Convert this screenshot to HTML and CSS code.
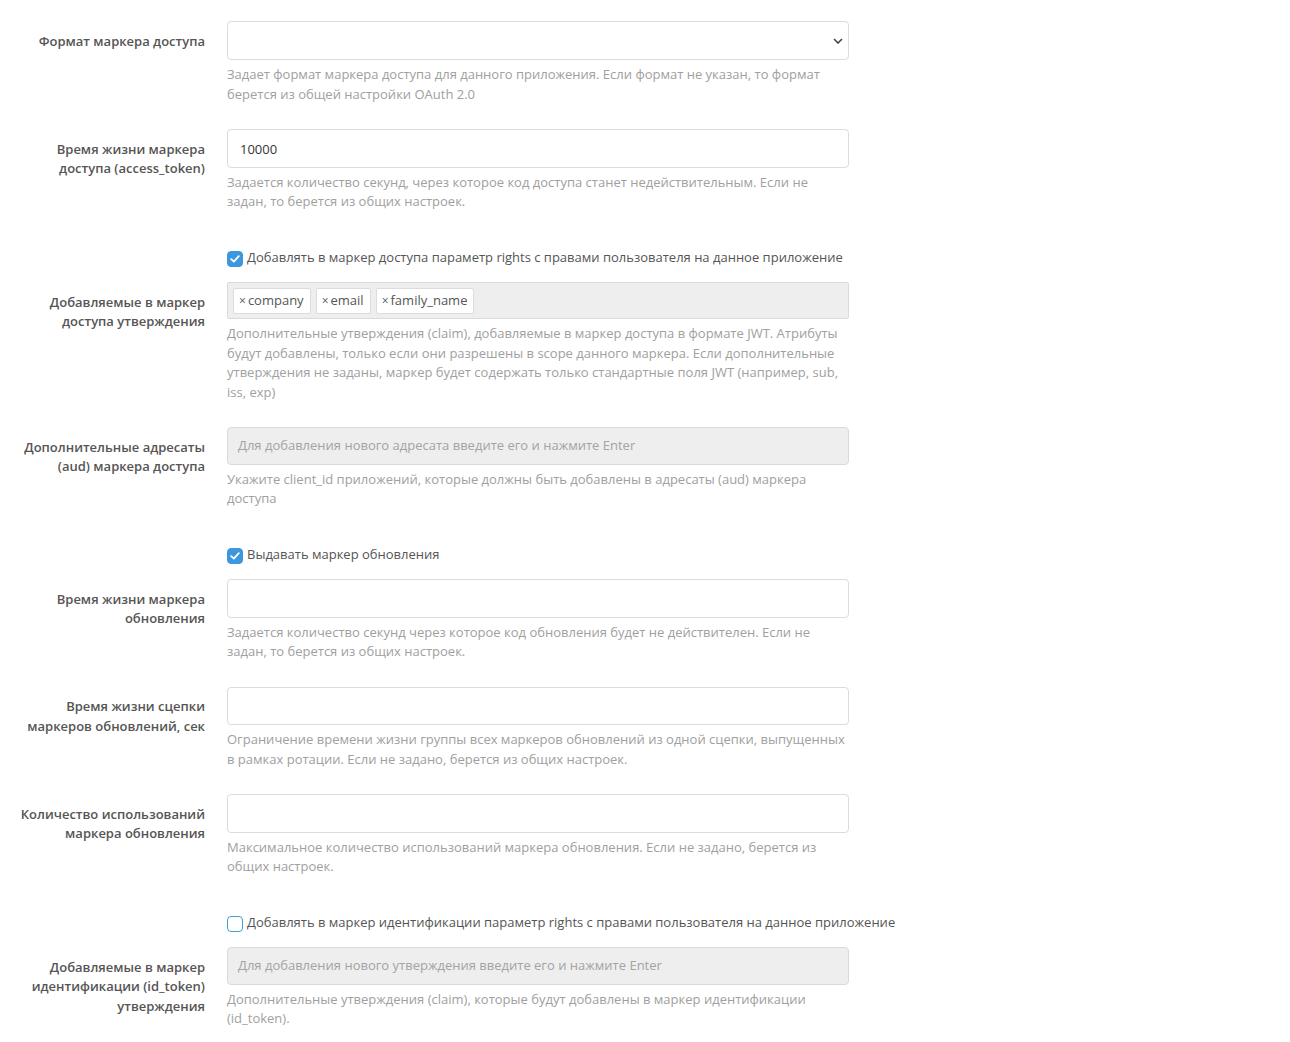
FILE: index.html
```html
<!DOCTYPE html>
<html lang="ru">
<head>
<meta charset="utf-8">
<link rel="stylesheet" href="styles.css">
</head>
<body>
<form class="form">
  <div class="group">
    <label class="lbl">Формат маркера доступа</label>
    <div class="ctl">
      <div class="select"><span class="chev"><svg width="10" height="6" viewBox="0 0 10 6"><path d="M1 1l4 4 4-4" fill="none" stroke="#444" stroke-width="1.6"/></svg></span></div>
      <p class="help">Задает формат маркера доступа для данного приложения. Если формат не указан, то формат берется из общей настройки OAuth 2.0</p>
    </div>
  </div>

  <div class="group">
    <label class="lbl">Время жизни маркера доступа (access_token)</label>
    <div class="ctl">
      <div class="input">10000</div>
      <p class="help">Задается количество секунд, через которое код доступа станет недействительным. Если не задан, то берется из общих настроек.</p>
    </div>
  </div>

  <div class="group check-group">
    <div></div>
    <div class="ctl">
      <label class="check"><span class="box on"><svg width="10" height="8" viewBox="0 0 10 8"><path d="M1.2 4.2l2.6 2.4L8.8 1.2" fill="none" stroke="#fff" stroke-width="1.8" stroke-linecap="round" stroke-linejoin="round"/></svg></span>Добавлять в маркер доступа параметр rights с правами пользователя на данное приложение</label>
    </div>
  </div>

  <div class="group">
    <label class="lbl">Добавляемые в маркер доступа утверждения</label>
    <div class="ctl">
      <div class="tags">
        <span class="tag"><span class="x">×</span>company</span>
        <span class="tag"><span class="x">×</span>email</span>
        <span class="tag"><span class="x">×</span>family_name</span>
      </div>
      <p class="help">Дополнительные утверждения (claim), добавляемые в маркер доступа в формате JWT. Атрибуты будут добавлены, только если они разрешены в scope данного маркера. Если дополнительные утверждения не заданы, маркер будет содержать только стандартные поля JWT (например, sub, iss, exp)</p>
    </div>
  </div>

  <div class="group">
    <label class="lbl">Дополнительные адресаты (aud) маркера доступа</label>
    <div class="ctl">
      <div class="input disabled ph">Для добавления нового адресата введите его и нажмите Enter</div>
      <p class="help">Укажите client_id приложений, которые должны быть добавлены в адресаты (aud) маркера доступа</p>
    </div>
  </div>

  <div class="group check-group">
    <div></div>
    <div class="ctl">
      <label class="check"><span class="box on"><svg width="10" height="8" viewBox="0 0 10 8"><path d="M1.2 4.2l2.6 2.4L8.8 1.2" fill="none" stroke="#fff" stroke-width="1.8" stroke-linecap="round" stroke-linejoin="round"/></svg></span>Выдавать маркер обновления</label>
    </div>
  </div>

  <div class="group">
    <label class="lbl">Время жизни маркера обновления</label>
    <div class="ctl">
      <div class="input"></div>
      <p class="help">Задается количество секунд через которое код обновления будет не действителен. Если не задан, то берется из общих настроек.</p>
    </div>
  </div>

  <div class="group">
    <label class="lbl">Время жизни сцепки маркеров обновлений, сек</label>
    <div class="ctl">
      <div class="input"></div>
      <p class="help">Ограничение времени жизни группы всех маркеров обновлений из одной сцепки, выпущенных в рамках ротации. Если не задано, берется из общих настроек.</p>
    </div>
  </div>

  <div class="group">
    <label class="lbl">Количество использований маркера обновления</label>
    <div class="ctl">
      <div class="input"></div>
      <p class="help">Максимальное количество использований маркера обновления. Если не задано, берется из общих настроек.</p>
    </div>
  </div>

  <div class="group check-group">
    <div></div>
    <div class="ctl">
      <label class="check"><span class="box"></span>Добавлять в маркер идентификации параметр rights с правами пользователя на данное приложение</label>
    </div>
  </div>

  <div class="group">
    <label class="lbl">Добавляемые в маркер идентификации (id_token) утверждения</label>
    <div class="ctl">
      <div class="input disabled ph">Для добавления нового утверждения введите его и нажмите Enter</div>
      <p class="help">Дополнительные утверждения (claim), которые будут добавлены в маркер идентификации (id_token).</p>
    </div>
  </div>
</form>
</body>
</html>
```

FILE: styles.css
```css
* { box-sizing: border-box; }
html, body { margin: 0; padding: 0; background: #fff; }
body {
  font-family: "Open Sans", "Noto Sans", sans-serif;
  font-size: 13px;
  line-height: 1.5;
  color: #555;
  padding-top: 21px;
}
.form { padding-left: 15px; }
.group {
  display: grid;
  grid-template-columns: 190px 622px;
  column-gap: 22px;
  margin-bottom: 15px;
}
.lbl {
  text-align: right;
  font-weight: 600;
  color: #555;
  padding-top: 10.5px;
}
.ctl { min-width: 0; }
.select, .input {
  height: 38.5px;
  border: 1px solid #dcdcdc;
  border-radius: 4px;
  background: #fff;
  padding: 9.5px 12px 7px;
  color: #333;
}
.select { position: relative; height: 39px; }
.chev { position: absolute; right: 5px; top: 16px; line-height: 0; }
.input.disabled {
  height: 37.5px;
  background: #eeeeee;
  border-color: #dadada;
  padding: 8px 10px;
}
.ph { color: #a3a3a3; }
.help {
  margin: 5px 0 10px;
  color: #a0a0a0;
}
.tags {
  height: 37px;
  background: #eeeeee;
  border: 1px solid #dadada;
  border-radius: 2px;
  padding: 5px;
  display: flex;
  gap: 5px;
}
.tag {
  height: 26px;
  display: flex;
  align-items: center;
  background: #fff;
  border: 1px solid #dcdcdc;
  border-radius: 2px;
  padding: 0 6px 0 5px;
  color: #555;
}
.tag .x { font-size: 12px; margin-right: 2px; color: #555; }
.check-group .ctl { padding-top: 11px; }
.check {
  display: flex;
  align-items: center;
  white-space: nowrap;
  color: #555;
  height: 19.5px;
}
.box {
  width: 16px;
  height: 16px;
  border-radius: 4px;
  border: 1.5px solid #3f9fd2;
  background: #fff;
  margin-right: 4px;
  margin-top: 3px;
  display: flex;
  align-items: center;
  justify-content: center;
  flex: none;
}
.box.on { background: #3b97de; border-color: #3b97de; }
```
